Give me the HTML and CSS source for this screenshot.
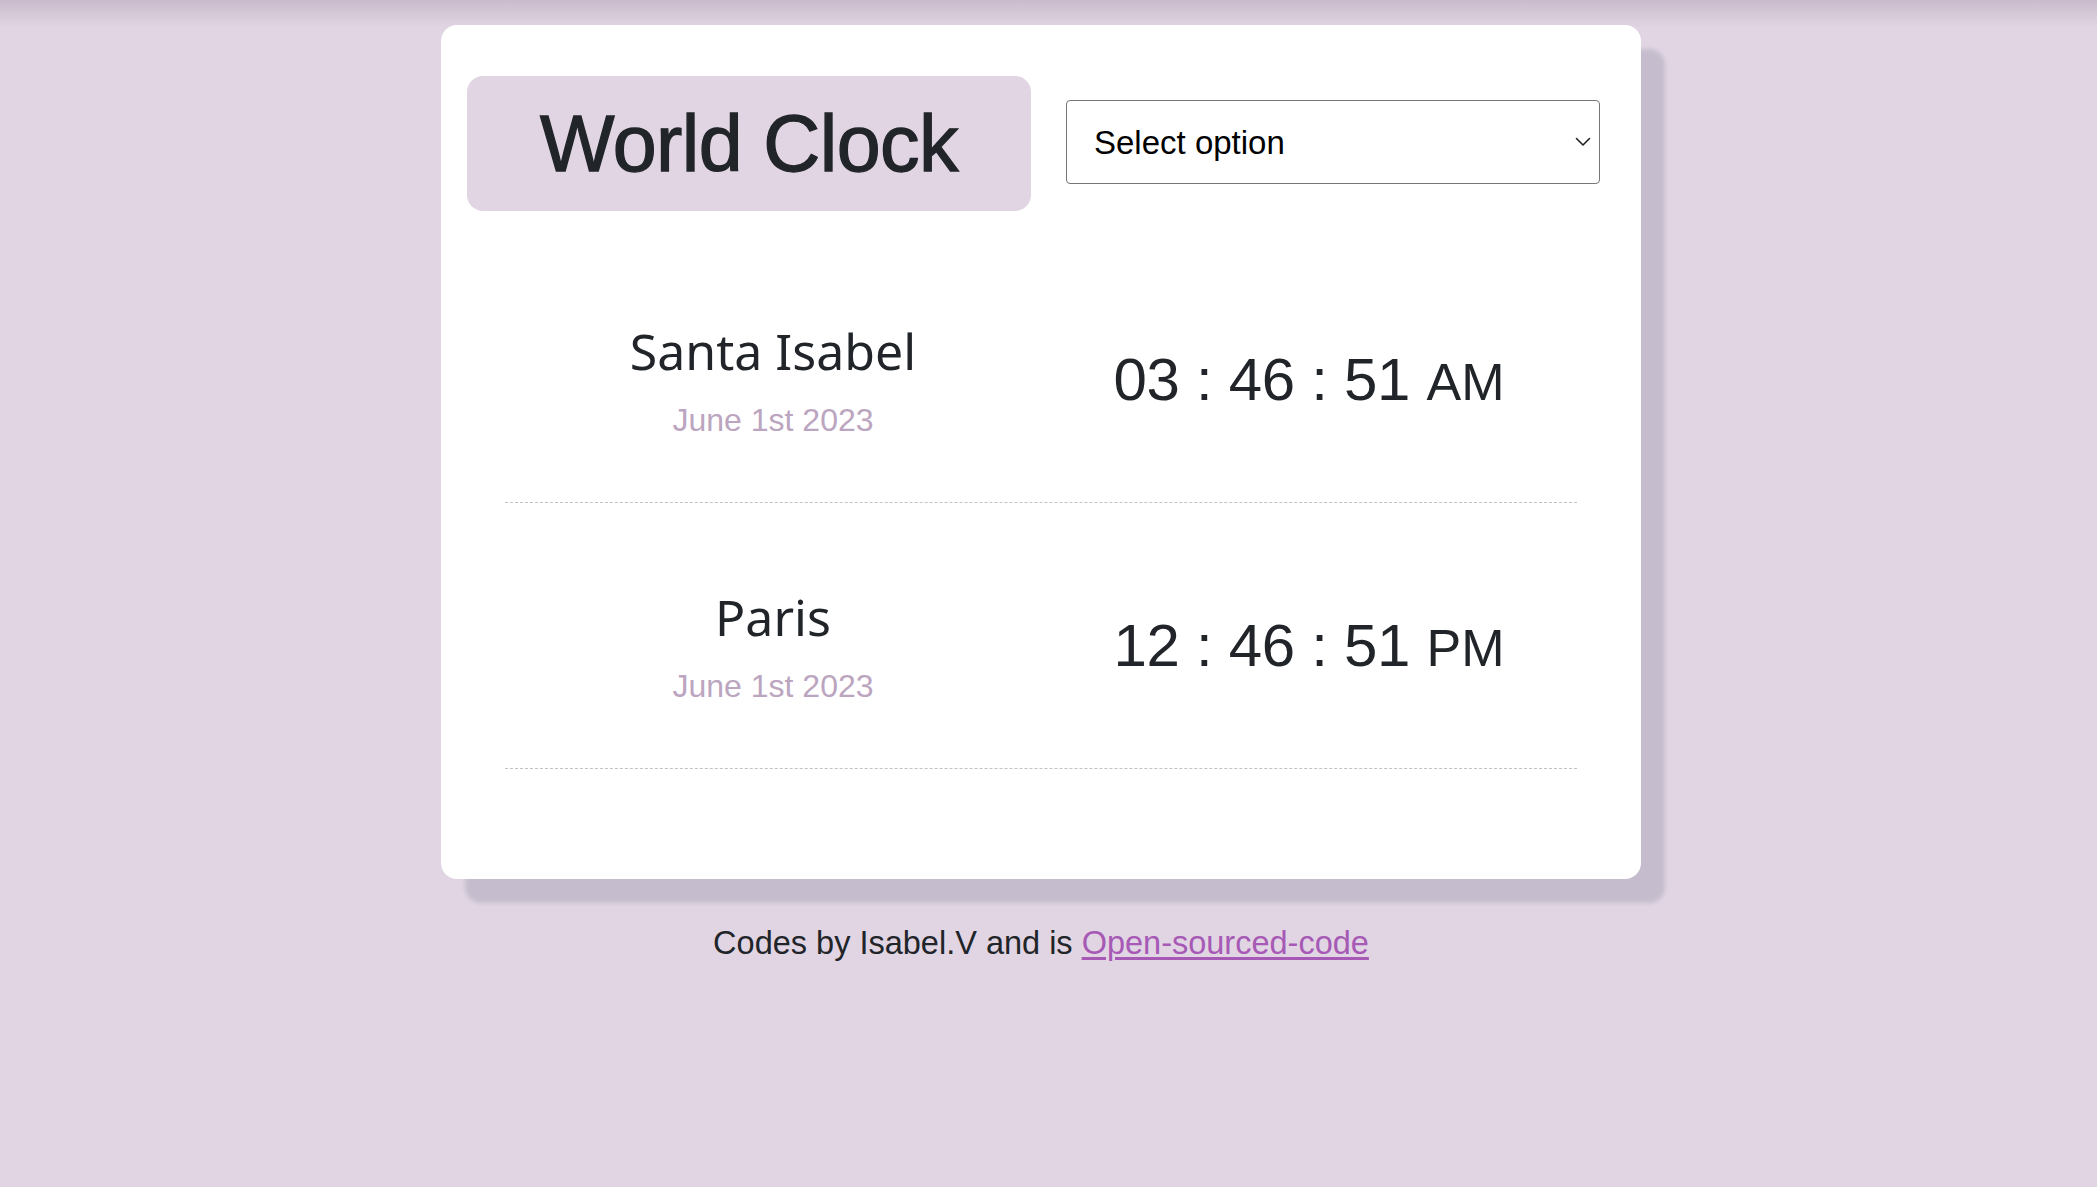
FILE: index.html
```html
<!DOCTYPE html>
<html lang="en">
<head>
<meta charset="utf-8">
<title>World Clock</title>
<link rel="stylesheet" href="styles.css">
</head>
<body>
<main class="card">
  <header class="header">
    <h1 class="title">World Clock</h1>
    <div class="select-wrap">
      <select class="city-select">
        <option>Select option</option>
        <option>Tokyo</option>
        <option>Sydney</option>
        <option>New York</option>
      </select>
      <svg class="chevron" width="16" height="10" viewBox="0 0 16 10" aria-hidden="true"><path d="M1.5 1.5 L8 8 L14.5 1.5" fill="none" stroke="#222" stroke-width="1.6" stroke-linecap="round" stroke-linejoin="round"/></svg>
    </div>
  </header>
  <section class="rows">
    <div class="row">
      <div class="place">
        <div class="city">Santa Isabel</div>
        <div class="date">June 1st 2023</div>
      </div>
      <div class="time">03 : 46 : 51 <small class="ampm">AM</small></div>
    </div>
    <div class="row">
      <div class="place">
        <div class="city">Paris</div>
        <div class="date">June 1st 2023</div>
      </div>
      <div class="time">12 : 46 : 51 <small class="ampm">PM</small></div>
    </div>
  </section>
</main>
<footer class="footer">Codes by Isabel.V and is <a class="link" href="#">Open-sourced-code</a></footer>
</body>
</html>
```

FILE: styles.css
```css
* { box-sizing: border-box; }

body {
  margin: 0;
  padding-right: 15px;
  min-height: 100vh;
  background: linear-gradient(#c9bbcb, #e1d5e3 28px) no-repeat top / 100% 28px, #e1d5e3;
  font-family: "Liberation Sans", Arial, sans-serif;
  color: #212529;
}

.card {
  width: 1200px;
  margin: 25px auto 0;
  background: #fff;
  border-radius: 16px;
  box-shadow: 24px 24px 4px #c5bdcd;
  padding: 51px 0 110px;
}

.header {
  display: flex;
  align-items: center;
  gap: 35px;
  padding: 0 41px 0 26px;
}

.title {
  margin: 0;
  width: 564px;
  height: 135px;
  flex: none;
  display: flex;
  align-items: center;
  justify-content: center;
  background: #e1d5e3;
  border-radius: 16px;
  font-size: 79px;
  font-weight: 400;
  letter-spacing: -0.6px;
  -webkit-text-stroke: 1.3px #212529;
  color: #212529;
}

.select-wrap {
  position: relative;
  flex: 1;
  height: 84px;
  margin-top: -3px;
}

.city-select {
  appearance: none;
  -webkit-appearance: none;
  width: 100%;
  height: 100%;
  border: 1px solid #767676;
  border-radius: 4px;
  background: #fff;
  padding: 0 40px 0 27px;
  font-family: "Liberation Sans", Arial, sans-serif;
  font-size: 33px;
  color: #000;
}

.chevron {
  position: absolute;
  right: 9px;
  top: 37px;
}

.rows {
  margin-top: 26px;
  padding: 0 64px;
}

.row {
  display: grid;
  grid-template-columns: 1fr 1fr;
  align-items: center;
  height: 266px;
  padding-top: 20px;
  border-bottom: 1px dashed #c2c2c2;
}

.place {
  text-align: center;
}

.city {
  font-family: "Noto Sans", sans-serif;
  font-size: 50px;
  line-height: 60px;
  color: #212529;
}

.date {
  margin-top: 20px;
  font-size: 32px;
  line-height: 38px;
  color: #bba5bf;
}

.time {
  text-align: center;
  font-size: 60px;
  letter-spacing: -0.3px;
  color: #212529;
}

.ampm {
  font-size: 52px;
  letter-spacing: 0;
}

.footer {
  margin-top: 40px;
  text-align: center;
  font-size: 32.5px;
  line-height: 48px;
  color: #212529;
}

.link {
  color: #a659b5;
  text-decoration: underline;
  text-underline-offset: 3px;
}
```
